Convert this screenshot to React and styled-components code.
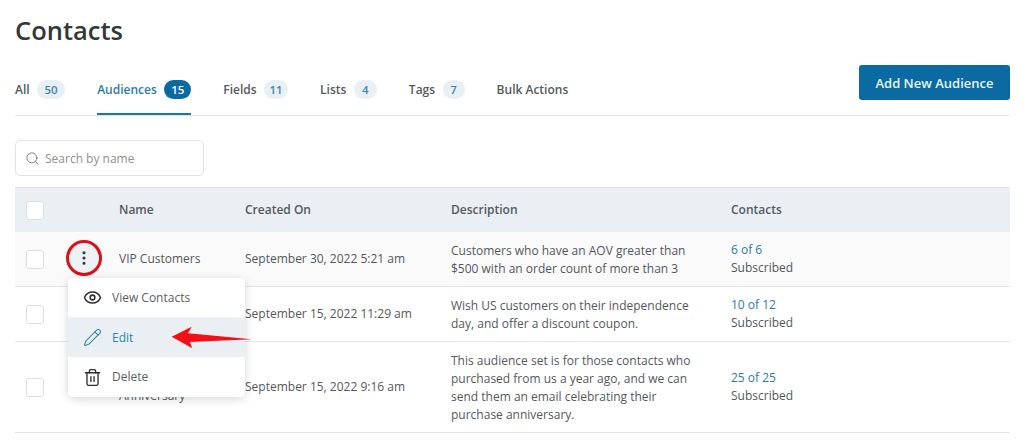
import React from 'react'
import styled, { createGlobalStyle } from 'styled-components'
import { Search, Eye, Pencil, Trash2, MoreVertical } from 'lucide-react'

const audiences = [
  {
    id: 1,
    name: 'VIP Customers',
    created: 'September 30, 2022 5:21 am',
    description: 'Customers who have an AOV greater than $500 with an order count of more than 3',
    contacts: '6 of 6',
    tall: 55,
    tinted: true,
    showMenu: true,
  },
  {
    id: 2,
    name: 'Independence Day',
    created: 'September 15, 2022 11:29 am',
    description: 'Wish US customers on their independence day, and offer a discount coupon.',
    contacts: '10 of 12',
    tall: 55,
  },
  {
    id: 3,
    name: 'Purchase Anniversary',
    created: 'September 15, 2022 9:16 am',
    description: 'This audience set is for those contacts who purchased from us a year ago, and we can send them an email celebrating their purchase anniversary.',
    contacts: '25 of 25',
    tall: 91,
  },
]

const tabs = [
  { label: 'All', count: 50, pill: 28 },
  { label: 'Audiences', count: 15, pill: 27, active: true },
  { label: 'Fields', count: 11, pill: 24 },
  { label: 'Lists', count: 4, pill: 23 },
  { label: 'Tags', count: 7, pill: 22 },
  { label: 'Bulk Actions' },
]

const App = () => {
  return (
    <>
      <GlobalStyle />
      <Page>
        <Title>Contacts</Title>
        <TabBar>
          <Tabs>
            {tabs.map((tab) => (
              <Tab key={tab.label} $active={tab.active}>
                {tab.label}
                {tab.count && <Count $active={tab.active} $width={tab.pill}>{tab.count}</Count>}
              </Tab>
            ))}
          </Tabs>
          <AddButton>Add New Audience</AddButton>
        </TabBar>
        <SearchBox>
          <Search size={15} strokeWidth={1.5} />
          <span>Search by name</span>
        </SearchBox>
        <Table>
          <HeadRow>
            <CheckCell><Checkbox /></CheckCell>
            <div>Name</div>
            <div>Created On</div>
            <div>Description</div>
            <div>Contacts</div>
          </HeadRow>
          {audiences.map((row) => (
            <Row key={row.id} $height={row.tall} $tinted={row.tinted}>
              <CheckCell>
                <Checkbox />
                {row.showMenu && (
                  <>
                    <Dots><MoreVertical size={18} strokeWidth={2.2} /></Dots>
                    <Menu>
                      <MenuItem>
                        <Eye size={19} strokeWidth={1.9} color="#2c2c2c" />
                        View Contacts
                      </MenuItem>
                      <MenuItem $active>
                        <Pencil size={19} strokeWidth={1.3} />
                        Edit
                      </MenuItem>
                      <MenuItem>
                        <Trash2 size={19} strokeWidth={1.7} color="#2c2c2c" />
                        Delete
                      </MenuItem>
                    </Menu>
                    <Arrow viewBox="0 0 82 23" aria-hidden="true">
                      <path d="M0.7 10.7 L20.7 0.7 L17 7.3 L80.7 13.3 L19 16 L21.3 22.3 Z" fill="#f30f17" />
                    </Arrow>
                  </>
                )}
              </CheckCell>
              <NameCell>{row.name}</NameCell>
              <div>{row.created}</div>
              <Description>{row.description}</Description>
              <div>
                <ContactLink>{row.contacts}</ContactLink>
                <div>Subscribed</div>
              </div>
            </Row>
          ))}
        </Table>
      </Page>
    </>
  )
}

const GlobalStyle = createGlobalStyle`
  html, body {
    margin: 0;
    padding: 0;
    background: #fff;
  }
  body {
    font-family: "Open Sans", "Noto Sans", sans-serif;
    color: #54585c;
    overflow: hidden;
  }
`

const Page = styled.div`
  width: 995px;
  height: 440px;
  padding: 12px 0 0 15px;
`

const Title = styled.h1`
  margin: 0;
  height: 36px;
  font-size: 25.5px;
  line-height: 36px;
  font-weight: 600;
  color: #33373a;
`

const TabBar = styled.div`
  height: 67px;
  border-bottom: 1px solid #e3e6e9;
  display: flex;
  justify-content: space-between;
  align-items: flex-start;
`

const Tabs = styled.div`
  display: flex;
  gap: 32px;
  padding-top: 32px;
`

const Tab = styled.div`
  height: 33px;
  display: flex;
  align-items: flex-start;
  line-height: 19px;
  gap: 7.5px;
  font-size: 12px;
  font-weight: 600;
  color: ${(p) => (p.$active ? '#2a7ba8' : '#55595d')};
  border-bottom: 2px solid ${(p) => (p.$active ? '#1d76a8' : 'transparent')};
`

const Count = styled.span`
  width: ${(p) => p.$width}px;
  height: 19px;
  border-radius: 10px;
  line-height: 19px;
  text-align: center;
  font-size: 11.5px;
  background: ${(p) => (p.$active ? '#0a6aa1' : '#e8f0f5')};
  color: ${(p) => (p.$active ? '#fff' : '#3f84ab')};
`

const AddButton = styled.button`
  width: 151px;
  height: 35px;
  margin: 17px 0 0;
  border: 0;
  border-radius: 3px;
  background: #0a6aa1;
  color: #e9f4fa;
  font: 600 13px "Open Sans", sans-serif;
`

const SearchBox = styled.div`
  width: 178px;
  height: 34px;
  margin-top: 24px;
  padding-left: 9px;
  border: 1px solid #dfe3e6;
  border-radius: 5px;
  display: flex;
  align-items: center;
  gap: 5px;
  font-size: 12px;
  color: #8d9195;
  svg { color: #75797d; }
`

const Table = styled.div`
  margin-top: 11px;
  font-size: 12px;
`

const gridColumns = '104px 126px 206px 280px 1fr'

const HeadRow = styled.div`
  height: 44px;
  display: grid;
  grid-template-columns: ${gridColumns};
  align-items: center;
  background: #e9eff3;
  border-top: 1px solid #e1e6ea;
  font-weight: 600;
  line-height: 42px;
  color: #55595d;
`

const Row = styled.div`
  height: ${(p) => p.$height}px;
  box-sizing: border-box;
  display: grid;
  grid-template-columns: ${gridColumns};
  align-items: center;
  line-height: 18px;
  background: ${(p) => (p.$tinted ? '#fafafa' : '#fff')};
  border-bottom: 1px solid #e3e6e9;
`

const CheckCell = styled.div`
  position: relative;
  padding-left: 11px;
  display: flex;
  align-items: center;
`

const Checkbox = styled.span`
  width: 16px;
  height: 17px;
  background: #fff;
  border: 1px solid #dcdfe2;
  border-radius: 3px;
`

const Dots = styled.span`
  position: absolute;
  left: 51px;
  top: -10px;
  width: 36px;
  height: 36px;
  box-sizing: border-box;
  border: 3.5px solid #d8111c;
  border-radius: 50%;
  background: #edf2f5;
  display: flex;
  align-items: center;
  justify-content: center;
  color: #2b3a44;
`

const Menu = styled.div`
  position: absolute;
  z-index: 2;
  left: 53px;
  top: 28px;
  width: 177px;
  height: 119px;
  background: #fff;
  border-radius: 5px;
  box-shadow: 0 2px 10px rgba(40, 50, 60, 0.2);
  overflow: hidden;
  display: flex;
  flex-direction: column;
`

const MenuItem = styled.div`
  flex: 1;
  display: flex;
  align-items: center;
  gap: 10px;
  padding: 1px 0 0 15px;
  background: ${(p) => (p.$active ? '#e9eff3' : '#fff')};
  color: ${(p) => (p.$active ? '#2d84b0' : '#5a5e62')};
  svg { flex: none; }
`

const Arrow = styled.svg`
  position: absolute;
  z-index: 3;
  left: 156px;
  top: 76px;
  width: 82px;
  height: 23px;
`

const NameCell = styled.div`
  width: 90px;
`

const Description = styled.div`
  width: 250px;
  padding-top: 1px;
`

const ContactLink = styled.div`
  color: #2a7ba8;
`

export default App
